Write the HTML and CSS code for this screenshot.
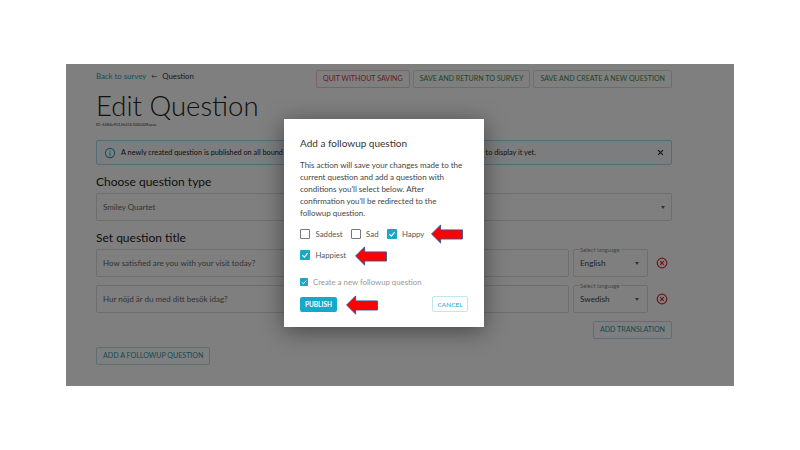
FILE: index.html
```html
<!DOCTYPE html>
<html lang="en">
<head>
  <meta charset="UTF-8" />
  <title>Edit Question</title>
  <link rel="stylesheet" href="styles.css">
</head>
<body>
  <div class="panel">
    <div class="top-row">
      <div class="crumbs"><a href="#">Back to survey</a><span class="crumb-sep">&#8592;</span><span>Question</span></div>
      <div class="top-actions">
        <button class="btn btn-red">QUIT WITHOUT SAVING</button>
        <button class="btn btn-green">SAVE AND RETURN TO SURVEY</button>
        <button class="btn btn-green">SAVE AND CREATE A NEW QUESTION</button>
      </div>
    </div>

    <h1>Edit Question</h1>
    <div class="question-id">ID: 6284e901264163000408aaaa</div>

    <div class="alert">
      <svg class="alert-icon" viewBox="0 0 12 12"><circle cx="6" cy="6" r="4.6" fill="none" stroke="#2b9fc9" stroke-width="1.1"/><path d="M6 5.4v3M6 3.4v1" stroke="#2b9fc9" stroke-width="1.1"/></svg>
      <span class="alert-text">A newly created question is published on all bound devices, even if the surveys on them have not been configured to display it yet.</span>
      <svg class="alert-close" viewBox="0 0 8 8"><path d="M1.2 1.2l5.6 5.6M6.8 1.2L1.2 6.8" stroke="#222" stroke-width="1.2"/></svg>
    </div>

    <h2>Choose question type</h2>
    <div class="field field-full">
      <span>Smiley Quartet</span>
      <span class="caret"></span>
    </div>

    <h2>Set question title</h2>
    <div class="title-row">
      <div class="field field-grow">How satisfied are you with your visit today?</div>
      <div class="field lang"><span class="lang-label">Select language</span><span>English</span><span class="caret"></span></div>
      <svg class="remove" viewBox="0 0 12 12"><circle cx="6" cy="6" r="4.8" fill="none" stroke="#e0303a" stroke-width="1.2"/><path d="M4.2 4.2l3.6 3.6M7.8 4.2L4.2 7.8" stroke="#e0303a" stroke-width="1.2"/></svg>
    </div>
    <div class="title-row">
      <div class="field field-grow">Hur nöjd är du med ditt besök idag?</div>
      <div class="field lang"><span class="lang-label">Select language</span><span>Swedish</span><span class="caret"></span></div>
      <svg class="remove" viewBox="0 0 12 12"><circle cx="6" cy="6" r="4.8" fill="none" stroke="#e0303a" stroke-width="1.2"/><path d="M4.2 4.2l3.6 3.6M7.8 4.2L4.2 7.8" stroke="#e0303a" stroke-width="1.2"/></svg>
    </div>

    <div class="translation-row"><button class="btn btn-blue">ADD TRANSLATION</button></div>
    <button class="btn btn-blue followup">ADD A FOLLOWUP QUESTION</button>

    <div class="overlay"></div>

    <div class="modal">
      <h3>Add a followup question</h3>
      <p>This action will save your changes made to the current question and add a question with conditions you'll select below. After confirmation you'll be redirected to the followup question.</p>

      <div class="options">
        <label class="opt"><span class="box"></span>Saddest</label>
        <label class="opt"><span class="box"></span>Sad</label>
        <label class="opt"><span class="box checked"><svg viewBox="0 0 10 10"><path d="M2.3 5.2l2 2 3.4-4" fill="none" stroke="#fff" stroke-width="1.1"/></svg></span>Happy</label>
        <label class="opt"><span class="box checked"><svg viewBox="0 0 10 10"><path d="M2.3 5.2l2 2 3.4-4" fill="none" stroke="#fff" stroke-width="1.1"/></svg></span>Happiest</label>
      </div>

      <label class="opt opt-create"><span class="box box-small checked"><svg viewBox="0 0 10 10"><path d="M2.3 5.2l2 2 3.4-4" fill="none" stroke="#fff" stroke-width="1.1"/></svg></span>Create a new followup question</label>

      <div class="modal-actions">
        <button class="publish">PUBLISH</button>
        <button class="cancel">CANCEL</button>
      </div>

      <svg class="arrow arrow-happy" viewBox="0 0 36 22"><path d="M1 11L11 1v5.500h24v10H11V21z" fill="#f00" stroke="#2f5597" stroke-width="1"/></svg>
      <svg class="arrow arrow-happiest" viewBox="0 0 36 22"><path d="M1 11L11 1v5.500h24v10H11V21z" fill="#f00" stroke="#2f5597" stroke-width="1"/></svg>
      <svg class="arrow arrow-publish" viewBox="0 0 36 22"><path d="M1 11L11 1v5.500h24v10H11V21z" fill="#f00" stroke="#2f5597" stroke-width="1"/></svg>
    </div>
  </div>
</body>
</html>
```

FILE: styles.css
```css
body {
  margin: 0;
  background: #fff;
  font-family: Lato, "Open Sans", sans-serif;
  color: #333;
}

.panel {
  position: relative;
  box-sizing: border-box;
  width: 668px;
  height: 322px;
  margin: 64px 0 0 66px;
  padding: 6px 62px 0 30px;
  background: #fff;
  overflow: hidden;
}

.overlay {
  position: absolute;
  inset: 0;
  background: rgba(0, 0, 0, 0.5);
}

.top-row {
  display: flex;
  justify-content: space-between;
  align-items: flex-start;
}

.crumbs {
  display: flex;
  align-items: center;
  font-size: 7.800px;
  line-height: 12px;
}

.crumbs a {
  color: #2a9bb5;
  text-decoration: none;
}

.crumb-sep {
  margin: 0 5px;
  font-size: 6px;
}

.top-actions {
  display: flex;
  gap: 3px;
}

.btn {
  box-sizing: border-box;
  height: 18px;
  padding: 0 6px;
  background: #fff;
  border: 1px solid;
  border-radius: 2px;
  font-family: inherit;
  font-size: 7.100px;
  line-height: 16px;
  white-space: nowrap;
}

.btn-red {
  color: #d8333c;
  border-color: #efc8ca;
}

.btn-green {
  color: #3d8b4a;
  border-color: #cfe3d0;
}

.btn-blue {
  color: #1f95ad;
  border-color: #b8dfe8;
}

h1 {
  margin: 3px 0 0;
  font-size: 27.500px;
  line-height: 30px;
  font-weight: 300;
  color: #222;
}

.question-id {
  margin-top: 1px;
  font-size: 4px;
  line-height: 6px;
  color: #444;
}

.alert {
  display: flex;
  align-items: center;
  box-sizing: border-box;
  height: 25px;
  margin-top: 12px;
  padding: 0 7px;
  border: 1px solid #9ed8f0;
  border-radius: 2px;
  background: #f6fbfd;
  font-size: 7.300px;
  color: #222;
}

.alert-icon {
  width: 12px;
  height: 12px;
  margin-right: 5px;
}

.alert-text {
  flex: 1;
  white-space: nowrap;
}

.alert-close {
  width: 7px;
  height: 7px;
}

h2 {
  margin: 8px 0 3px;
  font-size: 12px;
  line-height: 17px;
  font-weight: 400;
  color: #222;
}

.field {
  display: flex;
  align-items: center;
  box-sizing: border-box;
  height: 28px;
  padding: 0 6px;
  border: 1px solid #ddd;
  border-radius: 2px;
  font-size: 8px;
  color: #666;
}

.field-full {
  justify-content: space-between;
}

.caret {
  width: 0;
  height: 0;
  border-left: 2.500px solid transparent;
  border-right: 2.500px solid transparent;
  border-top: 3px solid #666;
}

.title-row {
  display: flex;
  align-items: center;
  margin-bottom: 8px;
}

.field-grow {
  flex: 1;
}

.lang {
  position: relative;
  justify-content: space-between;
  width: 75px;
  margin-left: 4px;
  font-size: 8.200px;
  color: #444;
}

.lang-label {
  position: absolute;
  top: -4px;
  left: 5px;
  padding: 0 1px;
  background: #fff;
  font-size: 5.800px;
  line-height: 7px;
  color: #888;
}

.lang .caret {
  margin-right: 2px;
}

.remove {
  width: 12px;
  height: 12px;
  margin: 0 4px 0 8px;
  flex-shrink: 0;
}

.translation-row {
  display: flex;
  justify-content: flex-end;
}

.followup {
  display: block;
  margin-top: 8px;
}

.modal {
  position: absolute;
  left: 218px;
  top: 55px;
  box-sizing: border-box;
  width: 200px;
  height: 208px;
  padding: 16px 16px 0;
  background: #fff;
  box-shadow: 0 4px 22px rgba(0, 0, 0, 0.45);
}

.modal h3 {
  margin: 0;
  font-size: 10px;
  line-height: 16px;
  font-weight: 400;
  color: #333;
}

.modal p {
  margin: 8px 0 0;
  font-size: 8px;
  line-height: 12px;
  color: #444;
}

.options {
  display: flex;
  flex-wrap: wrap;
  gap: 5px 8px;
  margin-top: 6.500px;
}

.opt {
  display: flex;
  align-items: center;
  height: 16px;
  font-size: 7.800px;
  color: #555;
}

.box {
  display: block;
  box-sizing: border-box;
  width: 10px;
  height: 10px;
  margin-right: 5.500px;
  border: 1px solid #777;
  border-radius: 1px;
}

.box svg {
  display: block;
  width: 10px;
  height: 10px;
}

.box.checked {
  background: #13a9c7;
  border: 0;
}

.options .opt:nth-child(4) {
  flex-basis: 100%;
}

.opt-create {
  margin-top: 11.500px;
  color: #999;
}

.box-small {
  width: 8px;
  height: 8px;
  margin-right: 5px;
}

.box-small svg {
  width: 8px;
  height: 8px;
}

.modal-actions {
  display: flex;
  justify-content: space-between;
  align-items: center;
  margin-top: 6px;
}

.publish {
  box-sizing: border-box;
  width: 37px;
  height: 15px;
  padding: 0;
  background: #13a9c7;
  border: 0;
  border-radius: 2px;
  color: #fff;
  font-family: inherit;
  font-size: 6.500px;
  font-weight: 700;
}

.cancel {
  box-sizing: border-box;
  width: 36px;
  height: 16px;
  padding: 0;
  background: #fff;
  border: 1px solid #bfe8f0;
  border-radius: 2px;
  color: #13a9c7;
  font-family: inherit;
  font-size: 6.500px;
}

.arrow {
  position: absolute;
  width: 34px;
  height: 20px;
}

.arrow-happy {
  left: 146px;
  top: 105px;
}

.arrow-happiest {
  left: 70px;
  top: 127px;
}

.arrow-publish {
  left: 61px;
  top: 176px;
}
```
